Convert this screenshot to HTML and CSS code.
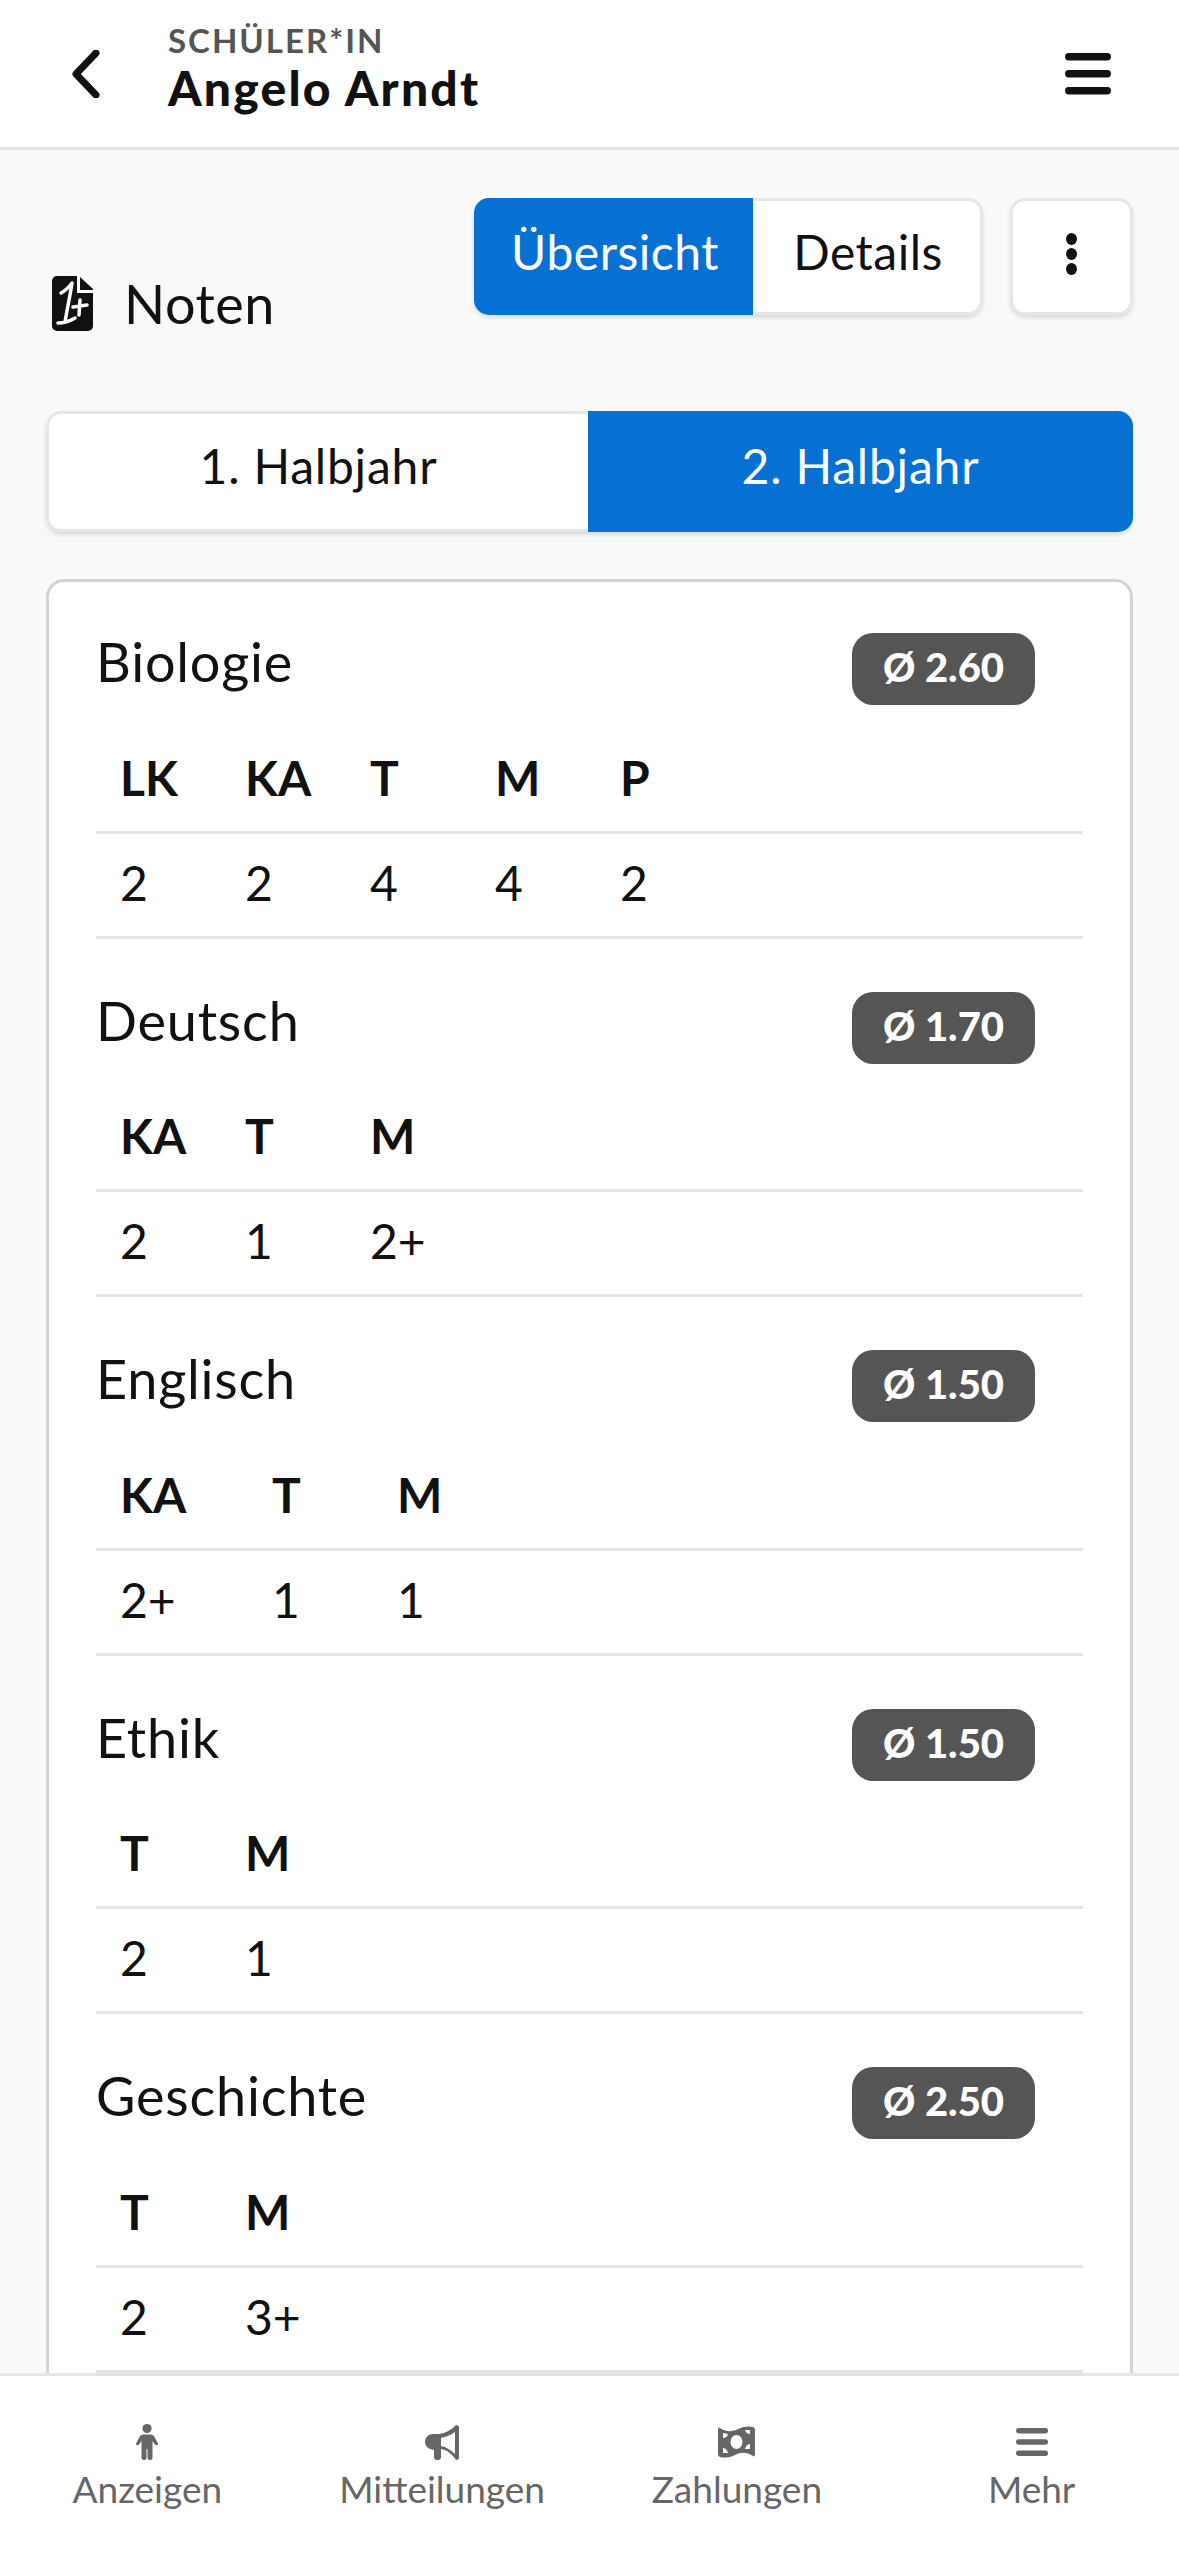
FILE: index.html
```html
<!DOCTYPE html>
<html lang="de">
<head>
<meta charset="utf-8">
<title>Noten</title>
<link rel="stylesheet" href="styles.css">
</head>
<body>
<div class="app">
  <header class="topbar">
    <svg class="back" viewBox="0 0 30 48"><path d="M24 3 4 24l20 21" /></svg>
    <div class="who">
      <div class="role">SCHÜLER*IN</div>
      <div class="name">Angelo Arndt</div>
    </div>
    <svg class="menu" viewBox="0 0 46 42"><rect x="0" y="0" width="46" height="7.5" rx="3.7"/><rect x="0" y="17" width="46" height="7.5" rx="3.7"/><rect x="0" y="34" width="46" height="7.5" rx="3.7"/></svg>
  </header>
  <main class="content">
    <div class="titlerow">
      <div class="title">
        <svg class="noteicon" viewBox="0 0 41 55">
          <path class="docbody" d="M5 0H25V17H41V50a5 5 0 0 1-5 5H5a5 5 0 0 1-5-5V5a5 5 0 0 1 5-5Z"/>
          <path class="docbody" d="M28 1 41 13V14H28Z"/>
          <path class="docmark" d="M9 17C13 15 17 11 20 7 18 20 15 34 13 46M6 47C12 47 18 45 23 42M28 24 27 39M21 31 35 29"/>
        </svg>
        <span class="titletext">Noten</span>
      </div>
      <div class="actions">
        <div class="segment">
          <button class="seg active">Übersicht</button>
          <button class="seg">Details</button>
        </div>
        <button class="more"><svg viewBox="0 0 11 42"><ellipse cx="5.5" cy="6" rx="5.5" ry="6"/><ellipse cx="5.5" cy="21" rx="5.5" ry="6"/><ellipse cx="5.5" cy="36" rx="5.5" ry="6"/></svg></button>
      </div>
    </div>
    <div class="tabs">
      <button class="tab">1. Halbjahr</button>
      <button class="tab active">2. Halbjahr</button>
    </div>
    <section class="card">
      <article class="subject">
        <div class="subhead"><h2>Biologie</h2><span class="badge">Ø 2.60</span></div>
        <table>
          <tr><th>LK</th><th>KA</th><th>T</th><th>M</th><th>P</th><th class="fill"></th></tr>
          <tr><td>2</td><td>2</td><td>4</td><td>4</td><td>2</td><td class="fill"></td></tr>
        </table>
      </article>
      <article class="subject">
        <div class="subhead"><h2>Deutsch</h2><span class="badge">Ø 1.70</span></div>
        <table>
          <tr><th>KA</th><th>T</th><th>M</th><th class="fill"></th></tr>
          <tr><td>2</td><td>1</td><td>2+</td><td class="fill"></td></tr>
        </table>
      </article>
      <article class="subject">
        <div class="subhead"><h2>Englisch</h2><span class="badge">Ø 1.50</span></div>
        <table>
          <tr><th class="wide">KA</th><th>T</th><th>M</th><th class="fill"></th></tr>
          <tr><td>2+</td><td>1</td><td>1</td><td class="fill"></td></tr>
        </table>
      </article>
      <article class="subject">
        <div class="subhead"><h2>Ethik</h2><span class="badge">Ø 1.50</span></div>
        <table>
          <tr><th>T</th><th>M</th><th class="fill"></th></tr>
          <tr><td>2</td><td>1</td><td class="fill"></td></tr>
        </table>
      </article>
      <article class="subject">
        <div class="subhead"><h2>Geschichte</h2><span class="badge">Ø 2.50</span></div>
        <table>
          <tr><th>T</th><th>M</th><th class="fill"></th></tr>
          <tr><td>2</td><td>3+</td><td class="fill"></td></tr>
        </table>
      </article>
    </section>
  </main>
  <nav class="bottom">
    <a class="navitem"><span class="navicon"><svg class="i-person" viewBox="0 0 22 36"><circle cx="11" cy="4.6" r="4.6"/><path d="M7.5 10.5h7c2 0 3.2 1 4.2 2.8l3 5.6c1 2-1.6 3.4-2.8 1.7L16.5 17v16.500a2.500 2.500 0 0 1-5 0V25h-1v8.500a2.500 2.500 0 0 1-5 0V17l-2.400 3.600C1.900 22.300-.7 20.900.3 18.900l3-5.600C4.300 11.500 5.500 10.500 7.500 10.500Z"/></svg></span><span>Anzeigen</span></a>
    <a class="navitem"><span class="navicon"><svg class="i-horn" viewBox="0 0 34 35"><path fill-rule="evenodd" d="M31 0c2 0 3 1 3 2.500v30c0 1.500-1 2.500-3 2.500C27 29 22 25 16 24v8c0 2-1 3-3 3h-1c-2 0-3-1-3-3v-7C3 24 0 21 0 17c0-5 4-8 8-8h6C21 8 26 5 31 0ZM30 7C26 10 21 12 16 13v8C21 22 26 25 30 29Z"/></svg></span><span>Mitteilungen</span></a>
    <a class="navitem"><span class="navicon"><svg class="i-money" viewBox="0 0 37 32"><path fill-rule="evenodd" d="M2 2C8 6 14 6 20 3 26 0 32 0 35 1c1 .5 2 1 2 3v24c0 2-1 3-2 2C29 26 23 26 17 29 11 32 5 32 2 31c-1-.5-2-1-2-3V4C0 2 1 1 2 2ZM18.500 9a6 7 0 1 0 0 14 6 7 0 1 0 0-14ZM5 7v5c2.500 0 4.500-1.500 5-4ZM27 4c.5 2 2.500 4 5 4V4ZM5 22v5h5c-.5-2.500-2.500-5-5-5ZM27 23h5v-5c-2.500 0-4.500 2.500-5 5Z"/></svg></span><span>Zahlungen</span></a>
    <a class="navitem"><span class="navicon"><svg class="i-bars" viewBox="0 0 32 28"><rect width="32" height="5.500" rx="2.700"/><rect y="11.250" width="32" height="5.500" rx="2.700"/><rect y="22.500" width="32" height="5.500" rx="2.700"/></svg></span><span>Mehr</span></a>
  </nav>
</div>
</body>
</html>
```
FILE: styles.css
```css
* { box-sizing: border-box; }
html, body { margin: 0; padding: 0; }
body {
  font-family: "Lato", "Noto Sans", sans-serif;
  background: #f9f9f9;
  color: #111;
}
.app { width: 1179px; height: 2556px; display: flex; flex-direction: column; overflow: hidden; }

.topbar {
  flex: none; height: 150px; background: #fff; border-bottom: 3px solid #e5e5e5;
  display: flex; align-items: center; padding: 0 68px 0 72px;
}
.back { width: 30px; height: 48px; fill: none; stroke: #111; stroke-width: 7; stroke-linecap: round; stroke-linejoin: round; margin-right: 66px; }
.who { flex: 1; margin-top: -14px; display: flex; flex-direction: column; gap: 4px; }
.role { font-size: 33px; font-weight: 700; color: #555; line-height: 38px; letter-spacing: 2px; }
.name { font-size: 48px; font-weight: 900; line-height: 50px; letter-spacing: 2.200px; }
.menu { width: 46px; height: 42px; fill: #111; }

.content { flex: 1; min-height: 0; overflow: hidden; padding: 48px 46px 0; display: flex; flex-direction: column; }
.titlerow { display: flex; justify-content: space-between; align-items: flex-end; height: 135px; flex: none; }
.title { display: flex; align-items: center; gap: 31px; margin-left: 6px; height: 55px; margin-bottom: 2px; }
.noteicon { width: 41px; height: 55px; }
.docbody { fill: #111; }
.docmark { fill: none; stroke: #fff; stroke-width: 3.500; stroke-linecap: round; stroke-linejoin: round; }
.titletext { font-size: 54px; letter-spacing: .5px; }
.actions { display: flex; gap: 27px; align-self: flex-start; }
.segment { display: flex; height: 117px; border-radius: 15px; box-shadow: 0 3px 4px rgba(0,0,0,.12); }
button { font-family: inherit; color: inherit; margin: 0; }
.seg { font-size: 48px; letter-spacing: .5px; border: 3px solid #e6e6e6; border-left: 0; background: #fff; width: 230px; padding: 0 0 10px 3px; border-radius: 0 15px 15px 0; }
.seg.active { width: 279px; background: #0771d3; color: #fff; border: 0; border-radius: 15px 0 0 15px; }
.more { width: 123px; height: 117px; background: #fff; border: 3px solid #e6e6e6; border-radius: 15px; box-shadow: 0 3px 4px rgba(0,0,0,.12); display: flex; align-items: center; justify-content: center; padding: 0 0 6px; }
.more svg { width: 11px; height: 42px; fill: #111; }

.tabs { flex: none; display: grid; grid-template-columns: 542px 1fr; height: 121px; margin-top: 78px; border-radius: 15px; box-shadow: 0 3px 4px rgba(0,0,0,.12); }
.tab { font-size: 48px; letter-spacing: .8px; background: #fff; border: 3px solid #e6e6e6; border-right: 0; border-radius: 15px 0 0 15px; padding: 0 0 12px; }
.tab.active { background: #0771d3; color: #fff; border: 0; border-radius: 0 15px 15px 0; }

.card { flex: none; margin-top: 47px; background: #fff; border: 3px solid #d3d3d3; border-radius: 18px; padding: 0 47px 80px; }
.subject { height: 358.500px; }
.subhead { height: 145px; display: flex; justify-content: space-between; padding: 50px 48px 0 0; }
h2 { margin: 0; font-weight: 400; font-size: 54px; line-height: 60px; letter-spacing: .8px; }
.badge { background: #555; color: #fff; font-weight: 900; font-size: 40px; width: 183px; height: 72px; margin-top: 1px; padding-bottom: 4px; border-radius: 21px; display: flex; align-items: center; justify-content: center; }
table { width: 100%; border-collapse: collapse; table-layout: fixed; }
th, td { width: 125px; padding: 0 0 3px 24px; text-align: left; font-size: 48px; border-bottom: 3px solid #e4e4e4; }
th { font-weight: 700; height: 105px; }
td { height: 105px; padding-bottom: 5px; font-weight: 400; }
th.wide { width: 152px; }
th.fill, td.fill { width: auto; }

.bottom {
  flex: none; height: 183px; background: #fff; border-top: 3px solid #e5e5e5;
  display: grid; grid-template-columns: repeat(4, 294.750px);
}
.navitem { display: flex; flex-direction: column; align-items: center; color: #666; font-size: 37px; padding-top: 46px; }
.navicon { height: 40px; display: flex; align-items: center; justify-content: center; margin-bottom: 4px; }
.navicon svg { fill: #666; display: block; }
.i-person { width: 22px; height: 36px; }
.i-horn { width: 34px; height: 35px; }
.i-money { width: 37px; height: 32px; }
.i-bars { width: 32px; height: 28px; }
```
